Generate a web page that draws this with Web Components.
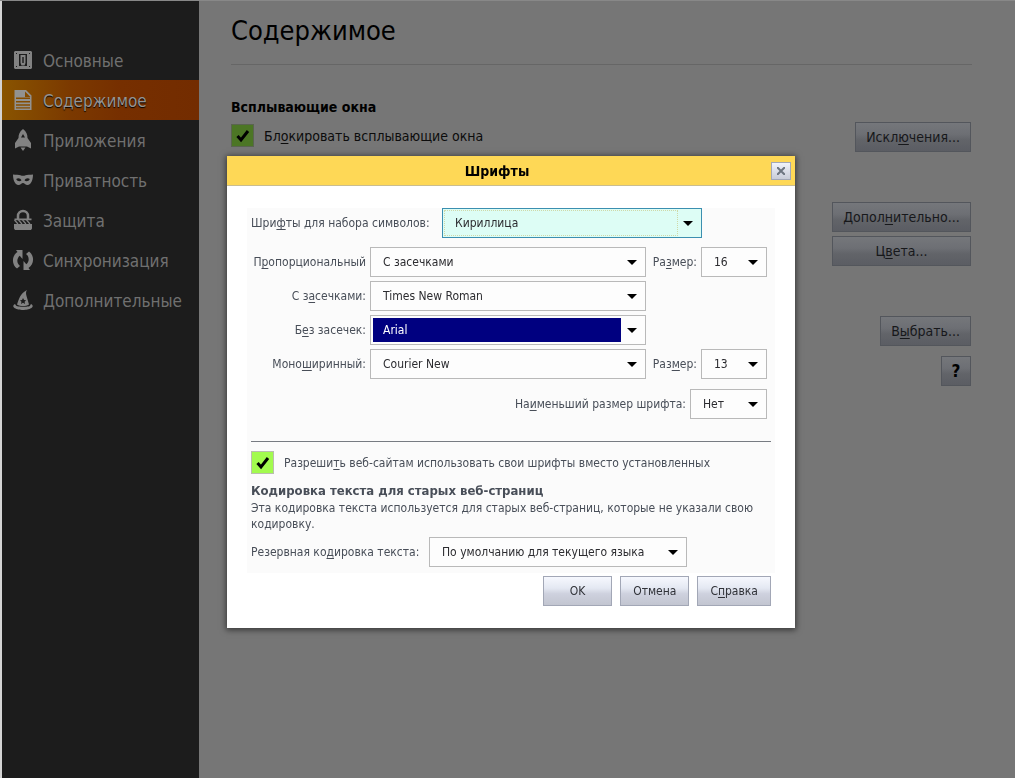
<!DOCTYPE html>
<html lang="ru">
<head>
<meta charset="utf-8">
<title>Содержимое</title>
<style>
html, body { margin: 0; height: 100%; }
body { font-family: "DejaVu Sans Condensed", "Noto Sans", sans-serif; font-size: 12px; background: #767676; }
</style>
</head>
<body>
<prefs-app></prefs-app>
<script>
const define = (name, html, setup) => {
  const t = document.createElement('template');
  t.innerHTML = '<style>*{box-sizing:border-box}u{text-underline-offset:2px}</style>' + html;
  customElements.define(name, class extends HTMLElement {
    constructor() {
      super();
      this.attachShadow({ mode: 'open' }).append(t.content.cloneNode(true));
    }
    connectedCallback() { if (setup) setup(this, this.shadowRoot); }
  });
};

const ICONS = {
  general: '<path fill-rule="evenodd" d="M2 1h16l1 1v16l-1 1H2l-1-1V2zM3 3v1h1V3zM16 3v1h1V3zM3 16v1h1v-1zM16 16v1h1v-1zM6 4v12h8V4z"/><path fill-rule="evenodd" d="M7.500 5h5v8l-1 2.500h-3l-1-2.500zM9.300 7v6h1.400V7z"/>',
  content: '<path fill-rule="evenodd" d="M1.500 0H13l5.500 5.500V20h-17zM12 1.500V7h5.500zM3 7.500V9h14V7.500zM3 11v1.500h14V11zM3 14.200v1.500h14v-1.500zM3 17.300v1.200h14v-1.200z"/>',
  apps: '<path fill-rule="evenodd" d="M10 -1c3.500 2.500 4.500 5.500 4.500 9l3.500 5v5.500l-4-2H6l-4 2V13l3.500-5c0-3.500 1-6.500 4.500-9zM10 4L8 7.500h4z"/><path d="M7.500 17.500h5L10 21z"/>',
  privacy: '<path fill-rule="evenodd" d="M0 4.500c3 .5 6 .2 7.500.7 1.500.7 3.500.7 5 0 1.500-.5 4.500-.2 7.500-.7 0 5-1.500 9.500-5 10.500-2.500.3-3.500-2-5-2s-2.500 2.300-5 2C1.500 14 0 9.500 0 4.500zM3.200 9c1 2.600 4 2.800 5.300 1.300C7.500 8 5 7.500 3.200 9zM16.800 9c-1.800-1.500-4.300-1-5.300 1.300 1.300 1.500 4.300 1.300 5.300-1.300z"/>',
  security: '<path fill="none" stroke="currentColor" stroke-width="2.500" d="M5 9V6a5 5 0 0 1 10 0v3"/><path d="M1.500 8.500h17v1.800h-17zM1 14h18v4.500l-1 1.500H2l-1-1.500z"/><path stroke="currentColor" stroke-width="1.200" d="M1.500 10l3.500 4M5.500 10l3.500 4M9.500 10l3.500 4M13.500 10l3.500 4"/>',
  sync: '<path d="M9.500 0H3l1.500 2C-1.500 6-1.500 14.500 4 18.500l3-2.500C3.500 13.500 3.500 8.500 6.700 5.700L9.500 9zM10.500 20H17l-1.500-2C21.500 14 21.500 5.500 16 1.500L13 4c3.500 2.500 3.500 7.500.3 10.300L10.500 11z"/>',
  advanced: '<path fill-rule="evenodd" d="M14 0c-1.500 2-1 4-.5 6l2.500 8.500c-3.500 2-8.500 2-12 0C6 9 7 3.500 14 0zM10 8l-1 2-2 .3 1.500 1.400-.5 2.300 2-1.200 2 1.200-.4-2.300 1.500-1.400-2-.3z"/><path d="M2 14c-5 3 2 6 8 6s13-3 8-6l-.8 1.200c.8 2-13.600 2-14.400 0z"/>'
};

define('nav-item', `<style>
:host { display: block; }
a { display: flex; align-items: center; gap: 10px; height: 40px; padding: 2px 0 0 11px; color: #707070; text-decoration: none; font-size: 17px; }
svg { width: 20px; height: 20px; margin-bottom: 2px; flex: none; fill: currentColor; color: #828282; overflow: visible; }
:host([active]) a { background: linear-gradient(90deg, #895400, #7b3900 35%, #762f00 60%, #732c00); color: #949494; text-shadow: 0 1px 1px #000; }
:host([active]) svg { color: #929292; }
</style><a href="#"><svg viewBox="0 0 20 20" aria-hidden="true"></svg><slot></slot></a>`,
(el, root) => {
  root.querySelector('svg').innerHTML = ICONS[el.getAttribute('icon')];
  if (el.hasAttribute('active')) root.querySelector('a').setAttribute('aria-current', 'page');
});

define('side-nav', `<style>
:host { display: block; background: #1c1c1c; border-left: 2px solid #d4d4d4; padding-top: 39px; }
</style><nav><slot></slot></nav>`);

define('pref-button', `<style>
:host { display: block; }
button { display: block; width: 100%; height: 30px; padding: 0 12px; border: 1px solid #a2a7b6; background: linear-gradient(#f6f8fe, #e4e8f2 40%, #ced1de 60%, #c2c5d0); color: #303238; font: inherit; white-space: nowrap; }
:host([dim]) button { padding: 0 10px; border-color: #53565c; background: linear-gradient(#75777b, #6d6f74 40%, #626469 60%, #5b5d63); color: #17181b; font-size: 14px; }
:host([strong]) button { color: #000; font-weight: bold; font-size: 17px; padding: 0; }
</style><button type="button"><slot></slot></button>`);

define('pref-check', `<style>
:host { display: block; }
label { display: flex; align-items: center; gap: 10px; color: #484e58; }
span { display: grid; flex: none; }
input, svg { grid-area: 1 / 1; width: 23px; height: 23px; margin: 0; }
input { appearance: none; background: #a2fb4e; border: 1px solid #b9bfae; }
svg { fill: none; stroke: #000; stroke-width: 3; pointer-events: none; }
:host([dim]) label { color: #0c0c0c; font-size: 14px; }
:host([dim]) input { background: #4c7625; border-color: #5a6450; }
</style><label><span><input type="checkbox" checked><svg viewBox="0 0 23 23" aria-hidden="true"><path d="M6.500 12l3.500 4L17 7"/></svg></span><slot></slot></label>`);

define('pref-select', `<style>
:host { display: flex; align-items: center; gap: 4px; color: #484e58; }
label { flex: 1; text-align: right; white-space: nowrap; }
:host([start]) label { flex: none; min-width: var(--label, 0); text-align: left; }
span { display: grid; align-items: center; width: var(--field, 276px); flex: none; }
select { grid-area: 1 / 1; appearance: none; width: 100%; height: 30px; padding: 0 24px 0 12px; border: 1px solid #b9b9b9; border-radius: 0; background: #fdfdfd; color: #2c2c30; font: inherit; outline: none; }
svg { grid-area: 1 / 1; justify-self: end; width: 10px; height: 5px; margin-right: 9px; pointer-events: none; }
:host([focused]) select { border-color: #3b8fb0; background: #ddfdf5; }
:host([focused]) span::after { content: ""; grid-area: 1 / 1; align-self: stretch; margin: 2px 24px 2px 2px; border: 1px dotted #cfd8a8; pointer-events: none; }
:host([picked]) select { color: #fff; background: linear-gradient(#000080, #000080) 2px 2px / calc(100% - 26px) calc(100% - 4px) no-repeat #fdfdfd; }
</style><label for="field"><slot></slot></label><span><select id="field"><option></option></select><svg viewBox="0 0 10 5" aria-hidden="true"><path d="M0 0h10L5 5z"/></svg></span>`,
(el, root) => { root.querySelector('option').textContent = el.getAttribute('value'); });

define('content-pane', `<style>
:host { display: block; background: #767676; color: #000; padding: 13px 43px 0 32px; }
h1 { margin: 0; height: 51px; border-bottom: 1px solid #666; font-size: 27px; line-height: 34px; font-weight: normal; }
h2 { margin: 0; font-size: 14px; line-height: 18px; }
.popups { display: grid; grid-template-columns: 1fr auto; align-items: center; margin-top: 33px; padding-right: 1px; }
.left { display: grid; gap: 8px; }
.popups pref-button { align-self: end; margin-bottom: -5px; }
.stack { display: grid; gap: 4px; width: 139px; margin: 55px 1px 0 auto; }
.tail { display: grid; gap: 10px; justify-items: end; margin: 50px 1px 0 0; }
.help { width: 30px; }
</style>
<h1>Содержимое</h1>
<section class="popups"><div class="left"><h2>Всплывающие окна</h2><pref-check dim><div>Бл<u>о</u>кировать всплывающие окна</div></pref-check></div>
<pref-button dim>Искл<u>ю</u>чения...</pref-button></section>
<div class="stack"><pref-button dim>Допол<u>н</u>ительно...</pref-button><pref-button dim>Ц<u>в</u>ета...</pref-button></div>
<div class="tail"><pref-button dim>В<u>ы</u>брать...</pref-button><pref-button dim strong class="help">?</pref-button></div>`);

define('fonts-dialog', `<style>
:host { display: block; width: 568px; max-width: 100%; }
dialog { position: static; display: block; width: auto; margin: 0; padding: 0; border: 0; background: #fff; color: #484e58; box-shadow: 0 1px 6px 1px rgba(0,0,0,.55); }
header { display: grid; grid-template-columns: 1fr 28px; align-items: center; height: 30px; background: #fed856; border-bottom: 1px solid #c9bd90; }
h2 { margin: 0; text-align: center; font-size: 14px; color: #000; }
.close { display: grid; place-items: center; justify-self: end; width: 20px; height: 18px; margin-right: 4px; padding: 0; border: 1px solid #a2a7b6; background: linear-gradient(#f0f3fa, #c8ccd8); }
.close svg { width: 8px; height: 8px; stroke: #6d7580; stroke-width: 2; }
form { padding: 22px 20px; }
.panel { background: #fbfbfb; padding: 0 4px 6px; }
.charset { --label: 187px; --field: 260px; }
.fonts { display: grid; grid-template-columns: 1fr 117px; gap: 4px; margin: 9px 4px 0 0; }
.fonts > :not(.size) { grid-column: 1; }
.fonts > .size { --field: 66px; grid-column: 2; }
.min { --field: 77px; margin: 10px 4px 22px 0; }
hr { margin: 0 0 9px; border: 0; border-top: 1px solid #777b82; }
h3 { margin: 8px 0 0; font-size: 13px; line-height: 18px; }
p { margin: 0 0 5px; line-height: 16px; }
.encoding { --label: 174px; --field: 258px; }
footer { display: flex; justify-content: flex-end; gap: 8px; padding: 3px 4px 0; }
footer pref-button { min-width: 69px; }
</style>
<dialog open aria-labelledby="title">
<header><h2 id="title">Шрифты</h2><button class="close" type="button" aria-label="Закрыть"><svg viewBox="0 0 8 8"><path d="M0 0l8 8M8 0L0 8"/></svg></button></header>
<form>
<div class="panel">
<pref-select class="charset" start focused value="Кириллица">Шри<u>ф</u>ты для набора символов:</pref-select>
<div class="fonts">
<pref-select value="С засечками">П<u>р</u>опорциональный</pref-select><pref-select class="size" value="16">Ра<u>з</u>мер:</pref-select>
<pref-select value="Times New Roman">С з<u>а</u>сечками:</pref-select>
<pref-select picked value="Arial">Б<u>е</u>з засечек:</pref-select>
<pref-select value="Courier New">Моно<u>ш</u>иринный:</pref-select><pref-select class="size" value="13">Раз<u>м</u>ер:</pref-select>
</div>
<pref-select class="min" value="Нет">На<u>и</u>меньший размер шрифта:</pref-select>
<hr>
<pref-check><div>Разреши<u>т</u>ь веб-сайтам использовать свои шрифты вместо установленных</div></pref-check>
<h3>Кодировка текста для старых веб-страниц</h3>
<p>Эта кодировка текста используется для старых веб-страниц, которые не указали свою кодировку.</p>
<pref-select class="encoding" start value="По умолчанию для текущего языка">Резервная ко<u>д</u>ировка текста:</pref-select>
</div>
<footer><pref-button>OK</pref-button><pref-button>Отмена</pref-button><pref-button>С<u>п</u>равка</pref-button></footer>
</form>
</dialog>`);

define('prefs-app', `<style>
:host { display: grid; grid-template-columns: 199px 1fr; min-height: 100%; border-top: 1px solid #888; box-sizing: border-box; }
.overlay { position: fixed; inset: 0; display: grid; place-items: center; padding: 6px 0 0 7px; }
</style>
<side-nav>
<nav-item icon="general">Основные</nav-item>
<nav-item icon="content" active>Содержимое</nav-item>
<nav-item icon="apps">Приложения</nav-item>
<nav-item icon="privacy">Приватность</nav-item>
<nav-item icon="security">Защита</nav-item>
<nav-item icon="sync">Синхронизация</nav-item>
<nav-item icon="advanced">Дополнительные</nav-item>
</side-nav>
<content-pane></content-pane>
<div class="overlay"><fonts-dialog></fonts-dialog></div>`);
</script>
</body>
</html>
